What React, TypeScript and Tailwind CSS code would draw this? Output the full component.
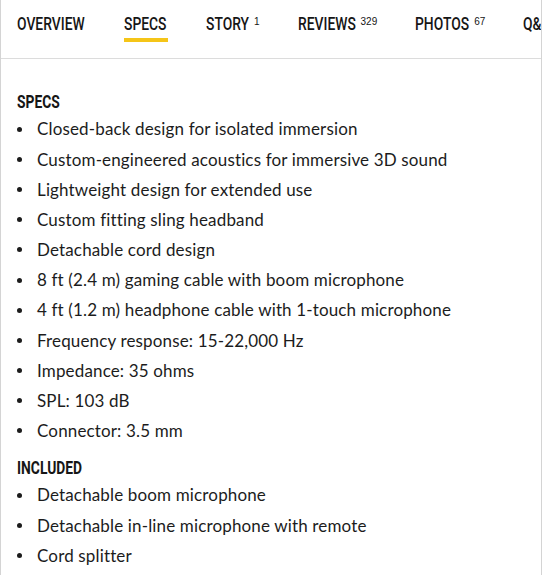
const tabs = [
  { label: "OVERVIEW", w: "w-[69px]" },
  { label: "SPECS", w: "w-[44px]", active: true },
  { label: "STORY", w: "w-[45px]", count: "1" },
  { label: "REVIEWS", w: "w-[60px]", count: "329" },
  { label: "PHOTOS", w: "w-[56px]", count: "67" },
  { label: "Q&A", w: "w-[34px]" },
]

const specs = [
  "Closed-back design for isolated immersion",
  "Custom-engineered acoustics for immersive 3D sound",
  "Lightweight design for extended use",
  "Custom fitting sling headband",
  "Detachable cord design",
  "8 ft (2.4 m) gaming cable with boom microphone",
  "4 ft (1.2 m) headphone cable with 1-touch microphone",
  "Frequency response: 15-22,000 Hz",
  "Impedance: 35 ohms",
  "SPL: 103 dB",
  "Connector: 3.5 mm",
]

const included = [
  "Detachable boom microphone",
  "Detachable in-line microphone with remote",
  "Cord splitter",
]

// no condensed face installed, so squeeze Roboto horizontally inside a fixed-width box
function Condensed({ text, w, className }: { text: string; w: string; className?: string }) {
  return (
    <span className={`${w} shrink-0 inline-block overflow-visible whitespace-nowrap ${className ?? ""}`}>
      <span className="inline-block origin-left scale-x-[0.77] font-['Roboto',sans-serif] text-[18px] text-[#161616]">
        {text}
      </span>
    </span>
  )
}

function BulletList({ items }: { items: string[] }) {
  return (
    <ul>
      {items.map((item) => (
        <li key={item} className="flex items-center h-[30.2px] text-[17px] tracking-[0.15px] text-[#1c1c1c]">
          <span className="w-[5px] h-[5px] rounded-full bg-[#1c1c1c] mr-[15px] shrink-0"></span>
          {item}
        </li>
      ))}
    </ul>
  )
}

export default function App() {
  return (
    <div className="w-[542px] h-[575px] overflow-hidden bg-white border-x border-[#d4d4d4] font-['Lato',sans-serif]">
      <nav className="h-[59px] border-b border-[#dcdcdc] px-[16px] flex gap-[38px] whitespace-nowrap overflow-hidden">
        {tabs.map((tab) => (
          <div key={tab.label} className="relative flex items-start pt-[12px] shrink-0">
            <div className="relative">
              <Condensed text={tab.label} w={tab.w} className="leading-[24px] font-medium" />
              {tab.active && (
                <span className="absolute left-0 right-0 top-[26px] h-[4px] bg-[#f5c518]"></span>
              )}
            </div>
            {tab.count && (
              <span className="ml-[3px] mt-[4px] text-[10px] leading-[12px] font-['Liberation_Sans',sans-serif] text-[#161616]">
                {tab.count}
              </span>
            )}
          </div>
        ))}
      </nav>

      <div className="px-[16px] pt-[31px]">
        <h2 className="leading-[24px] font-bold">
          <Condensed text="SPECS" w="w-[43px]" />
        </h2>
        <BulletList items={specs} />
        <h2 className="leading-[24px] mt-[10px] font-bold">
          <Condensed text="INCLUDED" w="w-[66px]" />
        </h2>
        <BulletList items={included} />
      </div>
    </div>
  )
}
